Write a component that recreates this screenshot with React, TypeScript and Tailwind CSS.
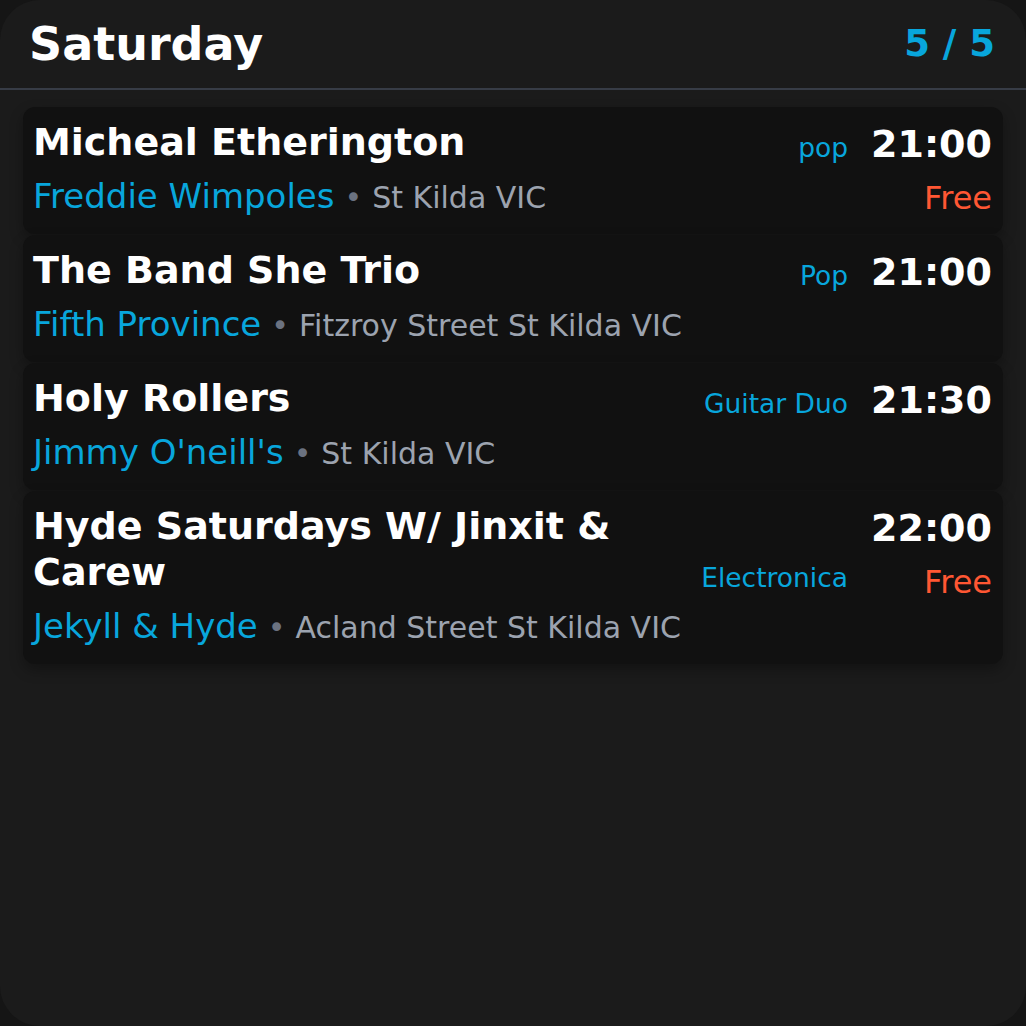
const gigs = [
  { title: "Micheal Etherington", venue: "Freddie Wimpoles", place: "St Kilda VIC", genre: "pop", time: "21:00", free: true },
  { title: "The Band She Trio", venue: "Fifth Province", place: "Fitzroy Street St Kilda VIC", genre: "Pop", time: "21:00", free: false },
  { title: "Holy Rollers", venue: "Jimmy O'neill's", place: "St Kilda VIC", genre: "Guitar Duo", time: "21:30", free: false },
  { title: "Hyde Saturdays W/ Jinxit & Carew", venue: "Jekyll & Hyde", place: "Acland Street St Kilda VIC", genre: "Electronica", time: "22:00", free: true },
];

type Gig = (typeof gigs)[number];

function GigCard({ gig }: { gig: Gig }) {
  return (
    <div className="flex gap-[23px] bg-[#111111] rounded-xl pl-[10px] pr-[11px] pt-[12px] pb-[14px] shadow-[0_6px_14px_rgba(0,0,0,0.3)]">
      {/* left: title + genre, venue line */}
      <div className="flex-1 min-w-0 flex flex-col">
        <div className="flex items-end gap-6">
          <h2 className="flex-1 min-w-0 text-[38px] leading-[46px] font-bold text-white">{gig.title}</h2>
          <span className="shrink-0 text-[26.5px] leading-[34px] text-[#08a6dc]">{gig.genre}</span>
        </div>
        <div className="mt-[9px] flex items-baseline leading-[44px] whitespace-nowrap">
          <span className="text-[34px] text-[#08a6dc]">{gig.venue}</span>
          <span className="text-[30px] text-[#6b7280] mx-[10px]">•</span>
          <span className="text-[30px] text-[#9ca3af]">{gig.place}</span>
        </div>
      </div>

      {/* right: time + price */}
      <div className="shrink-0 flex flex-col items-end pt-[2px]">
        <span className="text-[38px] leading-[47px] font-bold text-white">{gig.time}</span>
        {gig.free && <span className="mt-[10px] text-[32px] leading-[40px] text-[#ff5733]">Free</span>}
      </div>
    </div>
  );
}

export default function App() {
  return (
    <div className="w-[1026px] h-[1026px] bg-[#151515] font-['DejaVu_Sans',sans-serif]">
      <div className="h-full bg-[#1b1b1b] rounded-[40px] overflow-hidden flex flex-col">
        <header className="h-[90px] shrink-0 flex items-center justify-between pl-[29px] pr-[31px] border-b-2 border-[#373c46]">
          <h1 className="text-[46px] font-bold text-white">Saturday</h1>
          <span className="text-[37px] font-bold text-[#08a6dc]">5 / 5</span>
        </header>

        <div className="flex flex-col gap-px px-[23px] pt-[17px]">
          {gigs.map((g) => (
            <GigCard key={g.title} gig={g} />
          ))}
        </div>
      </div>
    </div>
  );
}
